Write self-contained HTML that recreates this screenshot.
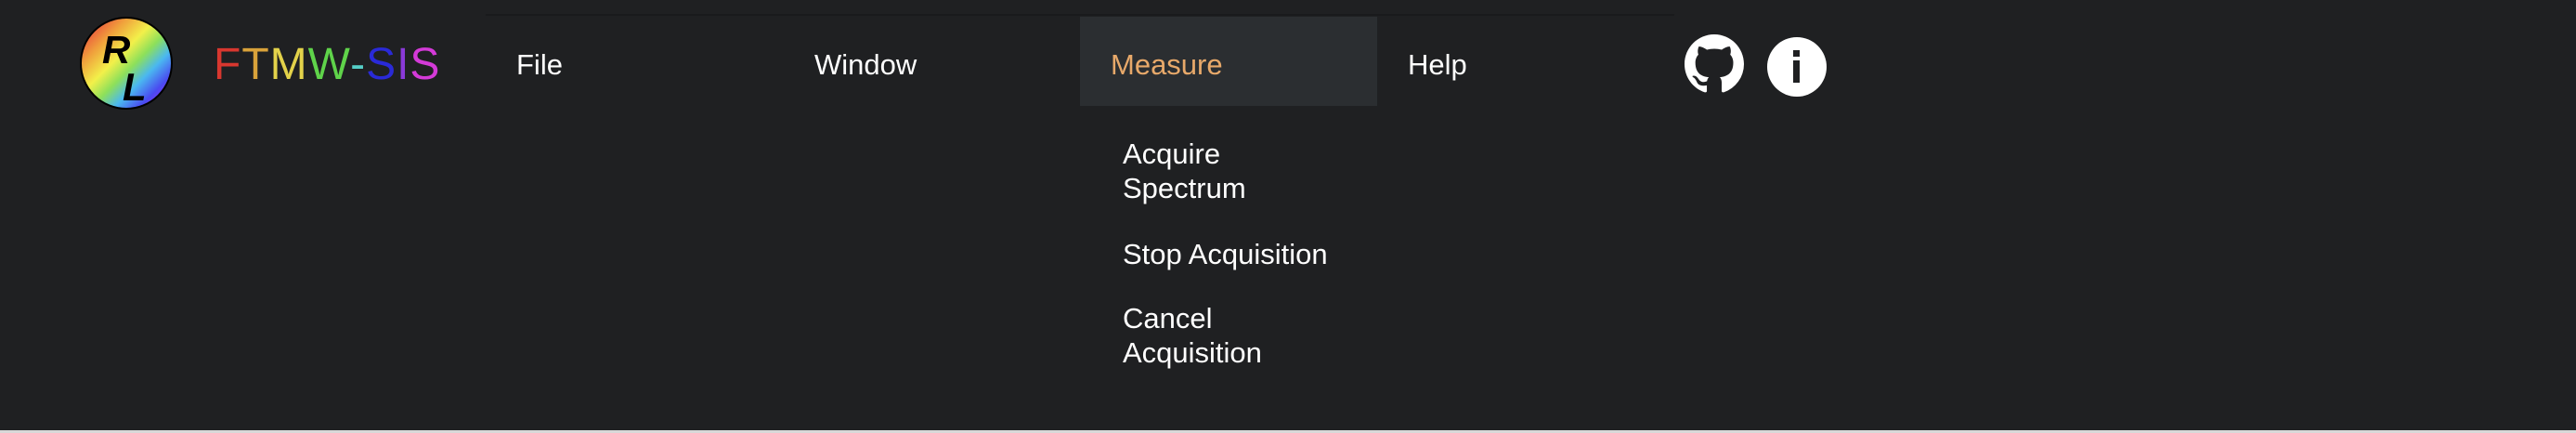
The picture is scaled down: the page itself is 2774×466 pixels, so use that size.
<!DOCTYPE html>
<html><head><meta charset="utf-8"><style>
html,body{margin:0;padding:0;}
body{width:2774px;height:466px;background:#1f2022;position:relative;overflow:hidden;font-family:"Liberation Sans",sans-serif;}
.a{position:absolute;line-height:31px;font-size:31px;color:#fff;white-space:nowrap;}
</style></head><body>
<div style="position:absolute;left:523px;top:15px;width:1280px;height:2px;background:#191a1c"></div>
<div style="position:absolute;left:0;top:463px;width:2774px;height:3px;background:#d8d8d8"></div>
<div style="position:absolute;left:86px;top:18px;width:96px;height:96px;border:2px solid #000;border-radius:50%;background:linear-gradient(135deg,#e8343c 5%,#f0a03c 25%,#f2f04a 42%,#8ee05a 55%,#4ab8f0 68%,#4a4af0 82%,#a030f0 95%);overflow:hidden">
<span style="position:absolute;left:22px;top:10px;font:italic bold 42px 'Liberation Sans',sans-serif;color:#000">R</span>
<span style="position:absolute;left:44px;top:50px;font:italic bold 42px 'Liberation Sans',sans-serif;color:#000">L</span>
</div>
<div style="position:absolute;left:230px;top:46px;font-size:48px;line-height:48px;letter-spacing:1px;font-weight:300"><span style="color:#d8372f">F</span><span style="color:#d9a23a">T</span><span style="color:#e3d24a">M</span><span style="color:#5fd34a">W</span><span style="color:#55cfc8">-</span><span style="color:#2a2ad8">S</span><span style="color:#8a3ad8">I</span><span style="color:#d43ad8">S</span></div>
<div class="a" style="left:556px;top:54px">File</div>
<div class="a" style="left:877px;top:54px">Window</div>
<div style="position:absolute;left:1163px;top:18px;width:320px;height:96px;background:#2b2e31"></div>
<div class="a" style="left:1196px;top:54px;color:#e8a96a">Measure</div>
<div class="a" style="left:1516px;top:54px">Help</div>
<svg style="position:absolute;left:1814px;top:37px" width="64" height="64" viewBox="0 0 16 16"><path fill="#fff" d="M8 0C3.580 0 0 3.580 0 8c0 3.540 2.290 6.530 5.470 7.590.4.07.55-.17.55-.38 0-.19-.01-.82-.01-1.490-2.010.37-2.530-.49-2.690-.94-.09-.23-.48-.94-.82-1.130-.28-.15-.68-.52-.01-.53.63-.01 1.080.58 1.230.82.72 1.210 1.870.87 2.330.66.07-.52.28-.87.51-1.070-1.780-.2-3.640-.89-3.640-3.950 0-.87.31-1.590.82-2.150-.08-.2-.36-1.020.08-2.120 0 0 .67-.21 2.200.82.64-.18 1.320-.27 2-.27.68 0 1.360.09 2 .27 1.530-1.040 2.200-.82 2.200-.82.44 1.100.16 1.920.08 2.120.51.56.82 1.270.82 2.150 0 3.070-1.870 3.750-3.650 3.950.29.25.54.73.54 1.480 0 1.070-.01 1.930-.01 2.200 0 .21.15.46.55.38A8.013 8.013 0 0016 8c0-4.420-3.580-8-8-8z"/></svg>
<svg style="position:absolute;left:1903px;top:40px" width="64" height="64" viewBox="0 0 64 64"><circle cx="32" cy="32" r="32" fill="#fff"/><rect x="28" y="14" width="7" height="7" fill="#1f2022"/><rect x="28" y="25" width="7" height="24" fill="#1f2022"/></svg>
<div class="a" style="left:1209px;top:147px;line-height:37px">Acquire<br>Spectrum</div>
<div class="a" style="left:1209px;top:255px;line-height:37px">Stop Acquisition</div>
<div class="a" style="left:1209px;top:324px;line-height:37px">Cancel<br>Acquisition</div>
</body></html>
